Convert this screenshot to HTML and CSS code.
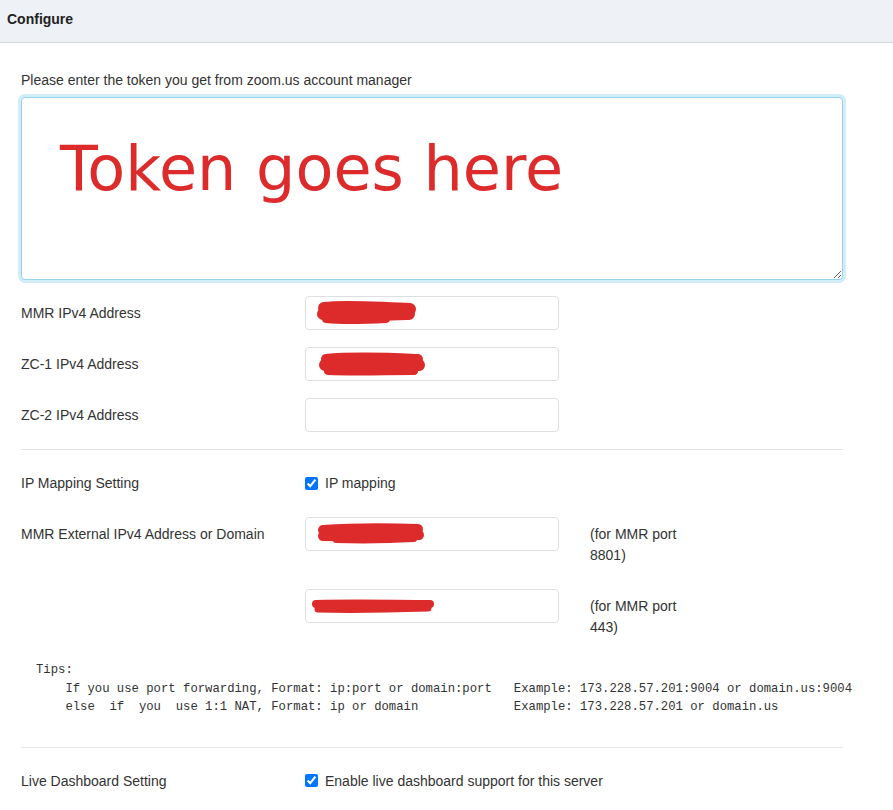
FILE: index.html
```html
<!DOCTYPE html>
<html>
<head>
<meta charset="utf-8">
<link rel="stylesheet" href="styles.css">
</head>
<body>
<header class="panel-heading">Configure</header>
<main class="panel-body">
  <label class="token-label">Please enter the token you get from zoom.us account manager</label>
  <textarea class="token">Token goes here</textarea>

  <div class="group">
    <div class="row">
      <span class="lbl">MMR IPv4 Address</span>
      <div class="field">
        <svg class="scribble" viewBox="0 0 252 32"><g fill="none" stroke="#dd2a2a" stroke-linecap="round"><path d="M18 11 C40 8, 70 11, 104 12" stroke-width="12"/><path d="M17 17 C40 19, 70 18, 103 17" stroke-width="12"/><path d="M20 22 C40 24, 60 23, 80 22" stroke-width="8"/></g></svg>
      </div>
    </div>
    <div class="row">
      <span class="lbl">ZC-1 IPv4 Address</span>
      <div class="field">
        <svg class="scribble" viewBox="0 0 252 32"><g fill="none" stroke="#dd2a2a" stroke-linecap="round"><path d="M20 11 C50 8, 90 10, 112 11" stroke-width="10"/><path d="M19 17 C50 18, 90 16, 113 17" stroke-width="12"/><path d="M22 23 C50 24, 80 23, 108 23" stroke-width="8"/></g></svg>
      </div>
    </div>
    <div class="row">
      <span class="lbl">ZC-2 IPv4 Address</span>
      <div class="field"></div>
    </div>
  </div>

  <hr class="sep">

  <div class="group">
    <div class="row">
      <span class="lbl">IP Mapping Setting</span>
      <label class="check"><input type="checkbox" checked> IP mapping</label>
    </div>
    <div class="row tall">
      <span class="lbl">MMR External IPv4 Address or Domain</span>
      <div class="field">
        <svg class="scribble" viewBox="0 0 252 32"><g fill="none" stroke="#dd2a2a" stroke-linecap="round"><path d="M17 12 C45 10, 85 10, 112 11" stroke-width="10"/><path d="M17 18 C45 19, 85 18, 113 17" stroke-width="10"/><path d="M30 22 C60 23, 90 22, 108 21" stroke-width="6"/></g></svg>
      </div>
      <span class="note">(for MMR port 8801)</span>
    </div>
    <div class="row tall">
      <span class="lbl"></span>
      <div class="field">
        <svg class="scribble" viewBox="0 0 252 32"><g fill="none" stroke="#dd2a2a" stroke-linecap="round"><path d="M10 14 C50 13, 90 14, 124 14" stroke-width="8"/><path d="M12 19 C50 20, 90 19, 122 18" stroke-width="7"/></g></svg>
      </div>
      <span class="note">(for MMR port 443)</span>
    </div>
  </div>

<pre class="tips">Tips:
    If you use port forwarding, Format: ip:port or domain:port   Example: 173.228.57.201:9004 or domain.us:9004
    else  if  you  use 1:1 NAT, Format: ip or domain             Example: 173.228.57.201 or domain.us</pre>

  <hr class="sep">

  <div class="group last">
    <div class="row">
      <span class="lbl">Live Dashboard Setting</span>
      <label class="check wide"><input type="checkbox" checked> Enable live dashboard support for this server</label>
    </div>
  </div>
</main>
</body>
</html>
```

FILE: styles.css
```css
html, body {
  margin: 0;
  padding: 0;
  background: #ffffff;
}

body {
  font-family: "Liberation Sans", Arial, sans-serif;
  font-size: 14px;
  line-height: 20px;
  color: #333333;
}

.panel-heading {
  box-sizing: border-box;
  height: 43px;
  padding: 9px 7px 0;
  background: #eef1f5;
  border-bottom: 1px solid #d3d6da;
  font-weight: bold;
  color: #222222;
}

.panel-body {
  padding: 27px 0 0 21px;
  width: 822px;
}

.token-label {
  display: block;
  margin-bottom: 7px;
}

.token {
  display: block;
  box-sizing: border-box;
  width: 822px;
  height: 183px;
  margin: 0 0 16px 0;
  padding: 35px 38px 0;
  border: 1px solid #97d3ec;
  border-radius: 4px;
  box-shadow: 0 0 0 3px #d2ecf8;
  outline: none;
  font-family: "DejaVu Sans", sans-serif;
  font-size: 62px;
  line-height: 72px;
  letter-spacing: 0;
  color: #dd2a2a;
  background: #ffffff;
}

.group {
  display: flex;
  flex-direction: column;
  gap: 17px;
  margin-bottom: 17px;
}

.row {
  display: grid;
  grid-template-columns: 284px 254px auto;
  align-items: start;
  min-height: 34px;
}

.row.tall + .row.tall {
  margin-top: 6px;
}

.lbl {
  padding-top: 7px;
  line-height: 20px;
}

.field {
  box-sizing: border-box;
  height: 34px;
  border: 1px solid #dedfe1;
  border-radius: 4px;
  background: #ffffff;
  overflow: hidden;
}

.scribble {
  display: block;
  width: 252px;
  height: 32px;
}

.note {
  width: 100px;
  margin-left: 31px;
  padding-top: 7px;
  line-height: 21px;
}

.check {
  display: flex;
  align-items: center;
  gap: 7px;
  height: 34px;
}

.check.wide {
  grid-column: span 2;
  white-space: nowrap;
}

.check input {
  margin: 0;
  width: 13px;
  height: 13px;
}

.sep {
  margin: 0 0 16px 0;
  border: 0;
  border-top: 1px solid #e5e5e5;
  height: 0;
}

.tips {
  margin: 23px 0 30px 15px;
  font-family: "Liberation Mono", "Courier New", monospace;
  font-size: 12.26px;
  line-height: 18.5px;
  color: #333333;
}

.group.last {
  margin-bottom: 0;
}
```
